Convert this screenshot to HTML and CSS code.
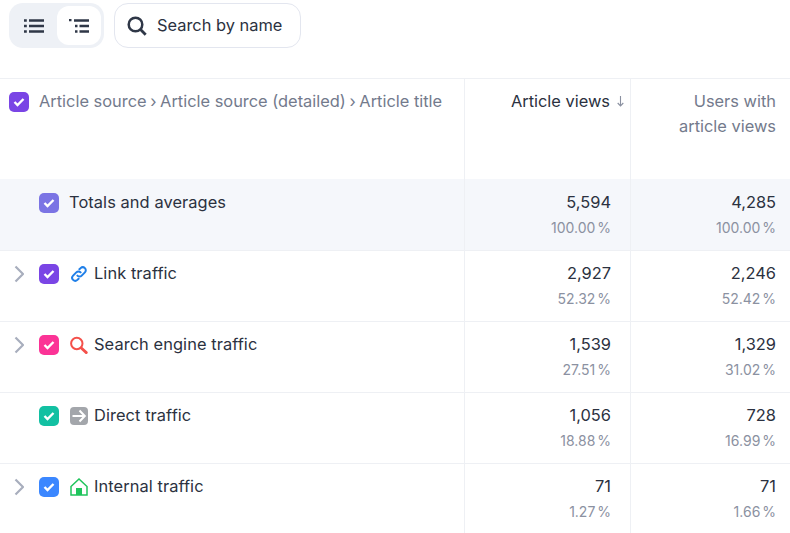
FILE: index.html
```html
<!DOCTYPE html>
<html lang="en">
<head>
  <meta charset="UTF-8" />
  <title>Article sources</title>
  <link rel="stylesheet" href="styles.css">
</head>
<body>
  <div class="toolbar">
    <div class="switch">
      <div class="switch-btn">
        <svg width="20" height="14" viewBox="0 0 20 14"><path d="M0 1.500h2.800M5 1.500h15M0 7h2.800M5 7h15M0 12.500h2.800M5 12.500h15" fill="none" stroke="#2f3747" stroke-width="2.500"/></svg>
      </div>
      <div class="switch-btn active">
        <svg width="20" height="14" viewBox="0 0 20 14"><path d="M0 1h2.500M5 1.500h15M6 7h2.500M10.500 7h9.500M6 12.500h2.500M10.500 12.500h9.500" fill="none" stroke="#2f3747" stroke-width="2.300"/></svg>
      </div>
    </div>
    <div class="search">
      <svg width="20" height="20" viewBox="0 0 20 20"><circle cx="8.500" cy="8.500" r="6.800" fill="none" stroke="#2f3747" stroke-width="2.500"/><path d="M13.300 13.300l5.400 5.400" stroke="#2f3747" stroke-width="2.800"/></svg>
      <span>Search by name</span>
    </div>
  </div>

  <div class="table">
    <!-- Header -->
    <div class="row head">
      <div class="cell name">
        <span class="check violet"><svg width="12" height="10" viewBox="0 0 12 10"><path d="M1.500 5l3 3 6-6" /></svg></span>
        <span class="head-title">Article source <span class="sep">›</span> Article source (detailed) <span class="sep">›</span> Article title</span>
      </div>
      <div class="cell col1 sorted">Article views<svg class="sort" width="7" height="11" viewBox="0 0 7 11"><path d="M3.500 0v10M.7 7l2.800 3 2.800-3"/></svg></div>
      <div class="cell col2 head-col">Users with<br>article views</div>
    </div>

    <!-- Totals -->
    <div class="row totals">
      <div class="cell name">
        <span class="arrow-slot"></span>
        <span class="check lilac"><svg width="12" height="10" viewBox="0 0 12 10"><path d="M1.500 5l3 3 6-6" /></svg></span>
        <span class="label totals-label">Totals and averages</span>
      </div>
      <div class="cell col1"><div class="num">5,594</div><div class="pct">100.00 %</div></div>
      <div class="cell col2"><div class="num">4,285</div><div class="pct">100.00 %</div></div>
    </div>

    <div class="row">
      <div class="cell name">
        <span class="arrow-slot"><svg width="12" height="18" viewBox="0 0 12 18"><path class="chevron" d="M3.500 1.500l7.500 7.500-7.500 7.500"/></svg></span>
        <span class="check purple"><svg width="12" height="10" viewBox="0 0 12 10"><path d="M1.500 5l3 3 6-6" /></svg></span>
        <svg class="src-icon" width="18" height="18" viewBox="0 0 18 18"><g fill="none" stroke="#1f7fe8" stroke-width="2" stroke-linecap="round"><path d="M7.400 10.600a3 3 0 0 0 4.300 0l3.200-3.200a3 3 0 0 0-4.300-4.300l-1.200 1.200"/><path d="M10.600 7.400a3 3 0 0 0-4.300 0l-3.200 3.200a3 3 0 0 0 4.300 4.300l1.200-1.200"/></g></svg>
        <span class="label">Link traffic</span>
      </div>
      <div class="cell col1"><div class="num">2,927</div><div class="pct">52.32 %</div></div>
      <div class="cell col2"><div class="num">2,246</div><div class="pct">52.42 %</div></div>
    </div>

    <div class="row">
      <div class="cell name">
        <span class="arrow-slot"><svg width="12" height="18" viewBox="0 0 12 18"><path class="chevron" d="M3.500 1.500l7.500 7.500-7.500 7.500"/></svg></span>
        <span class="check pink"><svg width="12" height="10" viewBox="0 0 12 10"><path d="M1.500 5l3 3 6-6" /></svg></span>
        <svg class="src-icon" width="18" height="18" viewBox="0 0 18 18"><circle cx="6.800" cy="7.500" r="5.700" fill="none" stroke="#f4504a" stroke-width="2"/><path d="M11.300 12l5 4.600" stroke="#f4504a" stroke-width="2.800" stroke-linecap="round"/></svg>
        <span class="label">Search engine traffic</span>
      </div>
      <div class="cell col1"><div class="num">1,539</div><div class="pct">27.51 %</div></div>
      <div class="cell col2"><div class="num">1,329</div><div class="pct">31.02 %</div></div>
    </div>

    <div class="row">
      <div class="cell name">
        <span class="arrow-slot"></span>
        <span class="check teal"><svg width="12" height="10" viewBox="0 0 12 10"><path d="M1.500 5l3 3 6-6" /></svg></span>
        <svg class="src-icon" width="18" height="18" viewBox="0 0 18 18"><rect width="18" height="18" rx="4" fill="#a3a6ab"/><path d="M2.500 9h12M9.500 3.500l5.300 5.500-5.300 5.500" fill="none" stroke="#fff" stroke-width="2"/></svg>
        <span class="label">Direct traffic</span>
      </div>
      <div class="cell col1"><div class="num">1,056</div><div class="pct">18.88 %</div></div>
      <div class="cell col2"><div class="num">728</div><div class="pct">16.99 %</div></div>
    </div>

    <div class="row">
      <div class="cell name">
        <span class="arrow-slot"><svg width="12" height="18" viewBox="0 0 12 18"><path class="chevron" d="M3.500 1.500l7.500 7.500-7.500 7.500"/></svg></span>
        <span class="check blue"><svg width="12" height="10" viewBox="0 0 12 10"><path d="M1.500 5l3 3 6-6" /></svg></span>
        <svg class="src-icon" width="18" height="18" viewBox="0 0 18 18"><path d="M1 8.500L9 1l8 7.500V17H1z" fill="none" stroke="#1fc45c" stroke-width="1.500"/><rect x="6" y="10" width="6" height="7" fill="#1fc45c"/></svg>
        <span class="label">Internal traffic</span>
      </div>
      <div class="cell col1"><div class="num">71</div><div class="pct">1.27 %</div></div>
      <div class="cell col2"><div class="num">71</div><div class="pct">1.66 %</div></div>
    </div>
  </div>
</body>
</html>
```

FILE: styles.css
```css
* {
  box-sizing: border-box;
  margin: 0;
  padding: 0;
}

html, body {
  height: 100%;
  overflow: hidden;
}

body {
  background: #fff;
  font-family: Inter, "Noto Sans", sans-serif;
  color: #2b3140;
}

.toolbar {
  display: flex;
  gap: 10px;
  height: 78px;
  padding: 3px 0 0 9px;
}

.switch {
  display: flex;
  width: 95px;
  height: 45px;
  padding: 3px;
  background: #eef1f6;
  border-radius: 14px;
}

.switch-btn {
  width: 45px;
  display: flex;
  align-items: center;
  justify-content: center;
  border-radius: 12px;
}

.switch-btn.active {
  background: #fff;
}

.search {
  display: flex;
  align-items: center;
  gap: 10px;
  width: 187px;
  height: 45px;
  padding: 0 0 2px 12px;
  border: 1px solid #e3e6ef;
  border-radius: 14px;
  font-size: 16.4px;
}

.search svg {
  margin-top: 2px;
}

.table {
  border-top: 1px solid #eef0f4;
}

.row {
  display: grid;
  grid-template-columns: 465px 166px 159px;
  height: 71px;
  border-bottom: 1px solid #eef0f4;
}

.row.head {
  height: 100px;
  border-bottom: none;
}

.row.totals {
  height: 72px;
  background: #f5f7fb;
}

.cell {
  padding-top: 10px;
  border-right: 1px solid #eef0f4;
  font-size: 16.4px;
  line-height: 25px;
  text-align: right;
}

.totals .cell {
  padding-top: 11px;
}

.col1 {
  padding-right: 19px;
}

.col2 {
  padding-right: 14px;
  border-right: none;
}

.name {
  display: flex;
  align-items: flex-start;
  padding-left: 12px;
  text-align: left;
}

.head .name {
  padding-left: 9px;
}

.arrow-slot {
  width: 27px;
  height: 25px;
  flex: none;
  padding-top: 4px;
}

.chevron {
  fill: none;
  stroke: #a8aebd;
  stroke-width: 2.2;
}

.check {
  display: flex;
  align-items: center;
  justify-content: center;
  flex: none;
  width: 20px;
  height: 20px;
  margin-top: 3px;
  border-radius: 5px;
}

.check path {
  fill: none;
  stroke: #fff;
  stroke-width: 2.4;
}

.violet, .purple { background: #7a45e5; }
.lilac { background: #7b74e4; }
.pink { background: #fb3396; }
.teal { background: #12c0a2; }
.blue { background: #3b87ff; }

.src-icon {
  flex: none;
  margin: 4px 6px 0 11px;
}

.label {
  white-space: nowrap;
  letter-spacing: 0.08px;
}

.totals-label {
  margin-left: 10px;
}

.head-title {
  margin-left: 10px;
  color: #737a8c;
  white-space: nowrap;
}

.sep {
  margin: 0 -1px;
}

.sorted {
  padding-right: 6px;
}

.sort {
  margin-left: 7px;
  fill: none;
  stroke: #8a90a0;
  stroke-width: 1.100;
}

.head-col {
  color: #737a8c;
}

.pct {
  font-size: 14px;
  color: #8b91a1;
  word-spacing: -2px;
}
```
